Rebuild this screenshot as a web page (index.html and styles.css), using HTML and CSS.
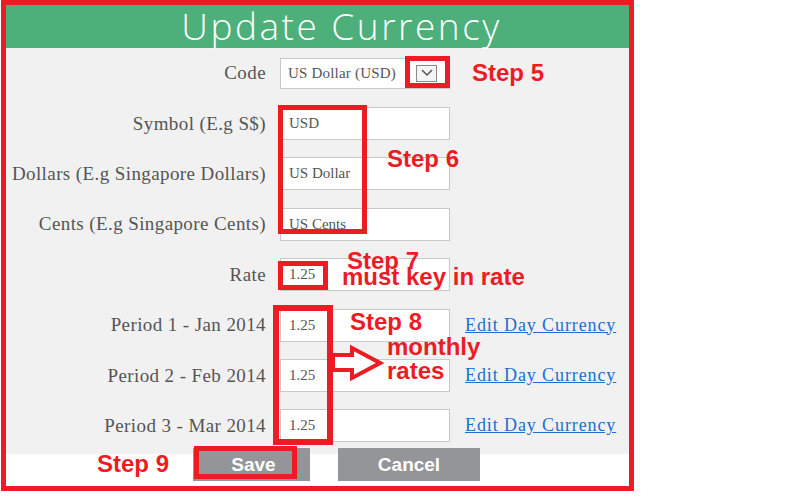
FILE: index.html
```html
<!DOCTYPE html>
<html lang="en">

<head>
  <meta charset="UTF-8">
  <title>Update Currency</title>
  <link rel="stylesheet" href="styles.css">
</head>

<body>

  <div class="frame">
    <header class="title-bar">
      <h1>Update Currency</h1>
    </header>

    <form class="currency-form">
      <div class="fields">
        <label>Code</label>
        <div class="select-box">
          <span>US Dollar (USD)</span>
          <span class="select-arrow">
            <svg width="12" height="8" viewBox="0 0 12 8"><polyline points="1,1 6,6 11,1" fill="none" stroke="#555" stroke-width="1.5"/></svg>
          </span>
        </div>
        <span></span>

        <label>Symbol (E.g S$)</label>
        <input type="text" value="USD">
        <span></span>

        <label>Dollars (E.g Singapore Dollars)</label>
        <input type="text" value="US Dollar">
        <span></span>

        <label>Cents (E.g Singapore Cents)</label>
        <input type="text" value="US Cents">
        <span></span>

        <label>Rate</label>
        <input type="text" value="1.25">
        <span></span>

        <label>Period 1 - Jan 2014</label>
        <input type="text" value="1.25">
        <a href="#">Edit Day Currency</a>

        <label>Period 2 - Feb 2014</label>
        <input type="text" value="1.25">
        <a href="#">Edit Day Currency</a>

        <label>Period 3 - Mar 2014</label>
        <input type="text" value="1.25">
        <a href="#">Edit Day Currency</a>
      </div>
    </form>

    <div class="actions">
      <button class="btn btn-save">Save</button>
      <button class="btn btn-cancel">Cancel</button>
    </div>

    <!-- tutorial annotations drawn over the form -->
    <div class="mark mark-code"></div>
    <div class="note note-5">Step 5</div>

    <div class="mark mark-names"></div>
    <div class="note note-6">Step 6</div>

    <div class="mark mark-rate"></div>
    <div class="note note-7">Step 7</div>
    <div class="note note-7b">must key in rate</div>

    <div class="mark mark-periods"></div>
    <div class="note note-8">Step 8</div>
    <svg class="arrow" width="54" height="40" viewBox="0 0 54 40">
      <path d="M3 10 H22 V3 L50 18 L22 33 V25 H3 Z" fill="#fff" stroke="#ed1c24" stroke-width="4"/>
    </svg>
    <div class="note note-8b">monthly<br>rates</div>

    <div class="mark mark-save"></div>
    <div class="note note-9">Step 9</div>
  </div>

</body>

</html>
```

FILE: styles.css
```css
body {
  margin: 0;
  padding: 0;
  background-color: white;
  font-family: 'Liberation Serif', 'Times New Roman', serif;
}

.frame {
  position: relative;
  width: 623px;
  height: 481px;
  margin-left: 1px;
  border: 5px solid #ed1c24;
  background-color: white;
}

/* Header */
.title-bar {
  height: 43px;
  background-color: #4daf7a;
  text-align: center;
  padding-left: 48px;
}

.title-bar h1 {
  margin: 0;
  font-family: 'Open Sans', sans-serif;
  font-weight: 300;
  font-size: 37px;
  letter-spacing: 2.5px;
  line-height: 42px;
  color: white;
}

/* Form */
.currency-form {
  height: 406px;
  background-color: #f1f1f1;
}

.fields {
  display: grid;
  grid-template-columns: 260px 170px 1fr;
  grid-template-rows: repeat(8, 50.4px);
  column-gap: 14px;
  align-items: center;
}

.fields label {
  text-align: right;
  font-size: 19px;
  letter-spacing: 0.4px;
  color: #555;
}

.fields input,
.select-box {
  box-sizing: border-box;
  width: 170px;
  height: 33px;
  margin: 0;
  padding: 0 8px;
  border: 1px solid #c8c8c8;
  background-color: white;
  font-family: 'Liberation Serif', 'Times New Roman', serif;
  font-size: 15px;
  color: #555;
  outline: none;
}

.select-box {
  display: flex;
  align-items: center;
  justify-content: space-between;
  height: 31px;
  padding: 0 12px 0 7px;
  letter-spacing: 0.2px;
}

.select-arrow {
  display: flex;
  align-items: center;
  justify-content: center;
  width: 19px;
  height: 15px;
  border: 1px solid #888;
  background-color: #f4f4f4;
}

.fields a {
  margin-left: 1px;
  font-size: 18px;
  letter-spacing: 0.9px;
  color: #1a6fd1;
}

/* Buttons */
.actions {
  display: flex;
  gap: 28px;
  padding-left: 187px;
}

.btn {
  height: 33px;
  margin-top: -6px;
  border: none;
  background-color: #939599;
  color: white;
  font-family: 'Liberation Sans', Arial, sans-serif;
  font-weight: bold;
  font-size: 19px;
}

.btn-save {
  width: 117px;
  padding-left: 10px;
}

.btn-cancel {
  width: 142px;
}

/* Annotations */
.mark {
  position: absolute;
  box-sizing: border-box;
  border: 5px solid #ed1c24;
}

.mark-code {
  left: 399px;
  top: 51px;
  width: 45px;
  height: 32px;
}

.mark-names {
  left: 272px;
  top: 100px;
  width: 89px;
  height: 129px;
}

.mark-rate {
  left: 272px;
  top: 256px;
  width: 50px;
  height: 29px;
}

.mark-periods {
  left: 267px;
  top: 300px;
  width: 60px;
  height: 140px;
  border-width: 6px;
}

.mark-save {
  left: 188px;
  top: 441px;
  width: 103px;
  height: 33px;
}

.note {
  position: absolute;
  font-family: 'Liberation Sans', Arial, sans-serif;
  font-weight: bold;
  font-size: 24px;
  line-height: 24px;
  color: #ed1c24;
  white-space: nowrap;
}

.note-5 { left: 466px; top: 56px; }
.note-6 { left: 381px; top: 142px; }
.note-7 { left: 341px; top: 247px; line-height: 18px; }
.note-7b { left: 336px; top: 263px; line-height: 18px; }
.note-8 { left: 344px; top: 305px; }
.note-8b { left: 381px; top: 330px; }
.note-9 { left: 91px; top: 447px; }

.arrow {
  position: absolute;
  left: 324px;
  top: 340px;
}
```
